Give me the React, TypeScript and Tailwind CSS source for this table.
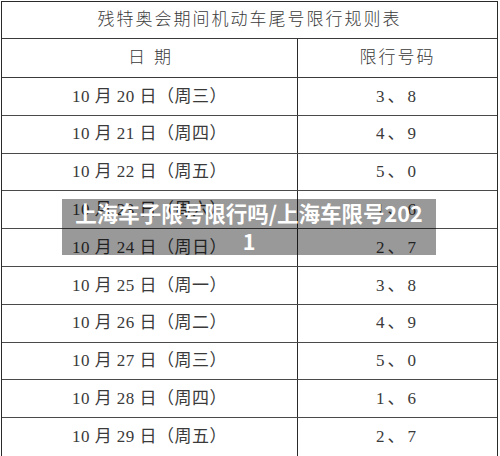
const rows = [
  { date: "10 月 20 日（周三）", nums: "3、8" },
  { date: "10 月 21 日（周四）", nums: "4、9" },
  { date: "10 月 22 日（周五）", nums: "5、0" },
  { date: "10 月 23 日（周六）", nums: "1、6" },
  { date: "10 月 24 日（周日）", nums: "2、7" },
  { date: "10 月 25 日（周一）", nums: "3、8" },
  { date: "10 月 26 日（周二）", nums: "4、9" },
  { date: "10 月 27 日（周三）", nums: "5、0" },
  { date: "10 月 28 日（周四）", nums: "1、6" },
  { date: "10 月 29 日（周五）", nums: "2、7" },
];

const serif = "font-['Liberation_Serif','Noto_Sans_CJK_SC',serif]";

export default function App() {
  return (
    <div className="relative w-[500px] h-[456px] bg-white overflow-hidden">
      <div className={`ml-[1px] mt-[1px] w-[497px] border border-[#2a2a2a] text-[#3a3a3a] ${serif}`}>
        <div className="h-[37px] border-b border-[#3a3a3a] flex items-center justify-center text-[17px] tracking-[2px] font-light">
          残特奥会期间机动车尾号限行规则表
        </div>
        <div className="h-[39px] border-b border-[#3a3a3a] grid grid-cols-[296px_1fr]">
          <div className="flex items-center justify-center border-r border-[#2a2a2a] text-[17px] font-light">
            日<span className="inline-block w-[9px]" />期
          </div>
          <div className="flex items-center justify-center text-[17px] tracking-[2px] font-light">限行号码</div>
        </div>
        {rows.map((r, i) => (
          <div
            key={i}
            className={`h-[37.8px] grid grid-cols-[296px_1fr] ${i < rows.length - 1 ? "border-b border-[#4a4a4a]" : ""}`}
          >
            <div className="flex items-center justify-center border-r border-[#2a2a2a] text-[17px] tracking-[0.5px] whitespace-pre">
              {r.date}
            </div>
            <div className="flex items-center justify-center text-[17px] tracking-[3px]">{r.nums}</div>
          </div>
        ))}
      </div>
      <div className="absolute left-[62px] top-[199px] w-[374px] h-[56px] bg-black/40 px-[10px] text-center text-white font-bold text-[21.5px] leading-[28px] font-['Noto_Sans_CJK_SC','Noto_Sans',sans-serif] break-all">
        上海车子限号限行吗/上海车限号2021
      </div>
    </div>
  );
}
